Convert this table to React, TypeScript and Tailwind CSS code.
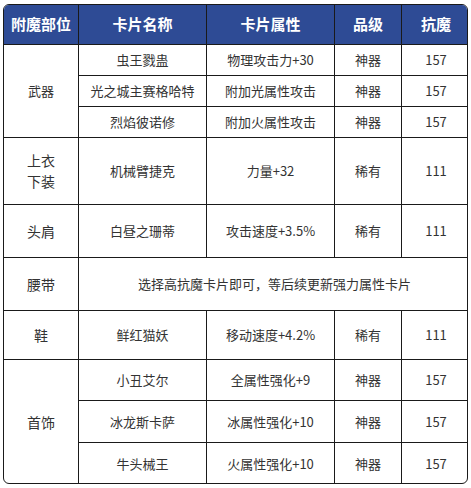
const font = { fontFamily: '"Noto Sans CJK SC", "Noto Sans", sans-serif' };

type Row = { name: string; attr: string; grade: string; res: string; h: string };

const cell = "border border-[#1a1a1a] text-center align-middle px-1";

const weapon: Row[] = [
  { name: "虫王戮蛊", attr: "物理攻击力+30", grade: "神器", res: "157", h: "h-[31px]" },
  { name: "光之城主赛格哈特", attr: "附加光属性攻击", grade: "神器", res: "157", h: "h-[31px]" },
  { name: "烈焰彼诺修", attr: "附加火属性攻击", grade: "神器", res: "157", h: "h-[31px]" },
];

const jewelry: Row[] = [
  { name: "小丑艾尔", attr: "全属性强化+9", grade: "神器", res: "157", h: "h-[41px]" },
  { name: "冰龙斯卡萨", attr: "冰属性强化+10", grade: "神器", res: "157", h: "h-[42px]" },
  { name: "牛头械王", attr: "火属性强化+10", grade: "神器", res: "157", h: "h-[42px]" },
];

function Cells({ r }: { r: Row }) {
  return (
    <>
      <td className={cell}>{r.name}</td>
      <td className={cell}>{r.attr}</td>
      <td className={cell}>{r.grade}</td>
      <td className={cell}>{r.res}</td>
    </>
  );
}

export default function App() {
  return (
    <div className="w-[471px] h-[488px] bg-white pt-[4px] pl-[3px]" style={font}>
      <div className="w-[465px] h-[480px] rounded-[6px] border border-[#1a1a1a] overflow-hidden">
        <table className="-m-px w-[467px] border-collapse table-fixed text-[13px] text-[#333]">
          <colgroup>
            <col className="w-[75px]" />
            <col className="w-[128px]" />
            <col className="w-[128px]" />
            <col className="w-[67px]" />
            <col className="w-[69px]" />
          </colgroup>
          <thead>
            <tr className="h-[40px] bg-[#2e4b95] text-white text-[15px] font-bold">
              <th className={cell}>附魔部位</th>
              <th className={cell}>卡片名称</th>
              <th className={cell}>卡片属性</th>
              <th className={cell}>品级</th>
              <th className={cell}>抗魔</th>
            </tr>
          </thead>
          <tbody>
            {weapon.map((r, i) => (
              <tr key={r.name} className={r.h}>
                {i === 0 && (
                  <td className={cell} rowSpan={3}>
                    武器
                  </td>
                )}
                <Cells r={r} />
              </tr>
            ))}
            <tr className="h-[67px]">
              <td className={`${cell} leading-[21px] text-[14px]`}>
                上衣
                <br />
                下装
              </td>
              <Cells r={{ name: "机械臂捷克", attr: "力量+32", grade: "稀有", res: "111", h: "" }} />
            </tr>
            <tr className="h-[53px]">
              <td className={`${cell} text-[14px]`}>头肩</td>
              <Cells r={{ name: "白昼之珊蒂", attr: "攻击速度+3.5%", grade: "稀有", res: "111", h: "" }} />
            </tr>
            <tr className="h-[53px]">
              <td className={`${cell} text-[14px]`}>腰带</td>
              <td className={cell} colSpan={4}>
                选择高抗魔卡片即可，等后续更新强力属性卡片
              </td>
            </tr>
            <tr className="h-[49px]">
              <td className={`${cell} text-[14px]`}>鞋</td>
              <Cells r={{ name: "鲜红猫妖", attr: "移动速度+4.2%", grade: "稀有", res: "111", h: "" }} />
            </tr>
            {jewelry.map((r, i) => (
              <tr key={r.name} className={r.h}>
                {i === 0 && (
                  <td className={`${cell} text-[14px]`} rowSpan={3}>
                    首饰
                  </td>
                )}
                <Cells r={r} />
              </tr>
            ))}
          </tbody>
        </table>
      </div>
    </div>
  );
}
